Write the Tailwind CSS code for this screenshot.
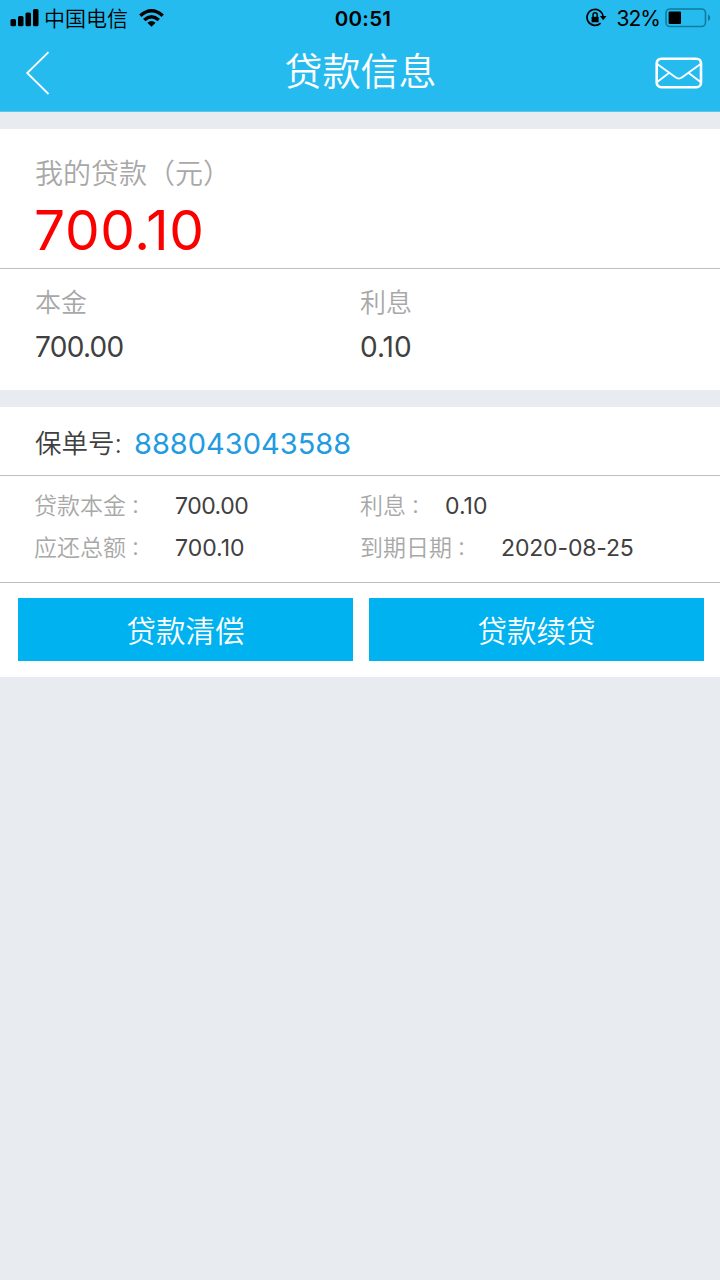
<!DOCTYPE html>
<html lang="zh-CN">
<head>
<meta charset="utf-8">
<title>贷款信息</title>
<script src="https://cdn.jsdelivr.net/npm/@tailwindcss/browser@4"></script>
</head>
<body class="h-[1280px] w-[720px] overflow-hidden bg-[#e8ebf0] font-['Inter','Noto_Sans_CJK_SC',sans-serif] whitespace-nowrap text-[#404040]">
<header class="h-[112px] bg-[#26bbef] border-b border-[#62c4e8]">
  <div class="flex h-9 items-center pl-[10px] pr-[8px] text-black">
    <div class="flex flex-1 items-center">
      <svg class="h-[18px] w-[29px]" viewBox="0 0 29 18"><rect x=".5" y="10" width="5.5" height="7.2" rx="1.5"/><rect x="8" y="7" width="5.5" height="10.2" rx="1.5"/><rect x="15.5" y="3.5" width="5.5" height="13.7" rx="1.5"/><rect x="23" y="0" width="5.5" height="17.2" rx="1.5"/></svg>
      <span class="ml-[5px] pt-[2px] text-[21px] font-[350] leading-9">中国电信</span>
      <svg class="ml-[11px] h-[18px] w-[25px]" viewBox="0 0 25 18" fill="none" stroke="#000" stroke-width="3.4"><path d="M1.3 6.8Q12.5-3.2 23.7 6.8M5.2 11Q12.5 4.6 19.8 11"/><path d="M8.4 13.8Q12.5 10.3 16.6 13.8L12.5 17.8Z" fill="#000" stroke="none"/></svg>
    </div>
    <span class="ml-[4px] pt-[1px] text-[20.5px] font-semibold leading-9 tracking-[0.3px]">00:51</span>
    <div class="flex flex-1 items-center justify-end">
      <svg class="h-[20px] w-[21px]" viewBox="0 0 21 20" fill="none" stroke="#000" stroke-width="1.7"><path d="M14.6 15.1A8 8 0 1 1 17 8.6"/><path d="M13.9 8H20.5L17.2 12.3Z" fill="#000" stroke="none"/><rect x="5.6" y="8.8" width="7" height="5.4" rx=".5" fill="#000" stroke="none"/><path d="M7 9V6.9a2.1 2.1 0 0 1 4.2 0V9" stroke-width="1.4"/></svg>
      <span class="ml-[10px] pt-px text-[21px] leading-9 tracking-[-1px]">32%</span>
      <svg class="ml-[5px] h-[20px] w-[47px]" viewBox="0 0 47 20"><rect x="1" y="1" width="39.5" height="17.5" rx="4" fill="none" stroke="#117b9d" stroke-width="1.6"/><rect x="3.6" y="3.6" width="12.4" height="12.4" rx="1"/><path d="M43 6.5q2.3 1 2.3 3.3t-2.3 3.3z" fill="#117b9d"/></svg>
    </div>
  </div>
  <div class="flex h-[75px] items-start justify-between pl-[25px] pr-[17px] text-white">
    <svg class="mt-[15px] h-[46px] w-[48px]" viewBox="0 0 48 46" fill="none" stroke="#fff" stroke-width="1.8"><path d="M23.5 1.2L2.2 22L23.5 43"/></svg>
    <h1 class="mr-[7px] text-[38px] font-[350] leading-[70px]">贷款信息</h1>
    <svg class="mt-[21px] h-[32px] w-[48px]" viewBox="0 0 48 32" fill="none" stroke="#fff"><rect x="1.7" y="1.7" width="44.3" height="28.5" rx="4.5" stroke-width="2.6"/><path d="M2.5 7.2L20.5 20.3Q23.8 22.8 27.2 20.3L45.2 7.2M2.5 24.8L14.3 15.8M45.2 24.8L33.4 15.8" stroke-width="1.8"/></svg>
  </div>
</header>

<main>
  <section class="mt-[17px] h-[261px] bg-white">
    <div class="h-[140px] border-b border-[#bebebe] px-[35px] pt-[26px]">
      <div class="h-[38px] text-[28px] font-[350] leading-[38px] text-[#a8a8a8]">我的贷款（元）</div>
      <div class="-ml-px text-[55px] leading-[74px] tracking-[0.7px] text-[#fc0000]">700.10</div>
    </div>
    <div class="grid grid-cols-[325px_1fr] px-[35px] pt-[15px]">
      <div class="text-[26px] font-[350] leading-[38px] text-[#a8a8a8]">本金</div>
      <div class="text-[26px] font-[350] leading-[38px] text-[#a8a8a8]">利息</div>
      <div class="text-[28px] leading-[50px] tracking-[-0.7px]">700.00</div>
      <div class="text-[28px] leading-[50px]">0.10</div>
    </div>
  </section>

  <section class="mt-[17px] h-[270px] bg-white">
    <div class="flex h-[69px] items-center border-b border-[#bebebe] px-[35px] pt-[5px]">
      <span class="pt-px text-[26.5px] font-[350]">保单号:</span>
      <span class="ml-[12px] text-[29px] text-[#229be0]">888043043588</span>
    </div>
    <div class="grid h-[107px] auto-rows-[42px] grid-cols-[326px_1fr] content-start border-b border-[#bebebe] pl-[34px] pt-[9px] text-[23px] leading-[42px]">
      <div class="flex"><span class="flex w-[141px] font-[350] text-[#a8a8a8]">贷款本金<span class="font-['Noto_Sans_CJK_TC',sans-serif] text-[19px]" lang="zh-TW">：</span></span><span class="tracking-[-0.5px]">700.00</span></div>
      <div class="flex"><span class="flex w-[85px] font-[350] text-[#a8a8a8]">利息<span class="font-['Noto_Sans_CJK_TC',sans-serif] text-[19px]" lang="zh-TW">：</span></span><span>0.10</span></div>
      <div class="flex"><span class="flex w-[141px] font-[350] text-[#a8a8a8]">应还总额<span class="font-['Noto_Sans_CJK_TC',sans-serif] text-[19px]" lang="zh-TW">：</span></span><span>700.10</span></div>
      <div class="flex"><span class="flex w-[141px] font-[350] text-[#a8a8a8]">到期日期<span class="font-['Noto_Sans_CJK_TC',sans-serif] text-[19px]" lang="zh-TW">：</span></span><span class="tracking-[-0.15px]">2020-08-25</span></div>
    </div>
    <div class="flex gap-[16px] pl-[18px] pr-[16px] pt-[15px]">
      <button class="h-[63px] flex-1 bg-[#00b2f0] pt-[3px] text-[29.5px] font-[350] text-white">贷款清偿</button>
      <button class="h-[63px] flex-1 bg-[#00b2f0] pt-[3px] text-[29.5px] font-[350] text-white">贷款续贷</button>
    </div>
  </section>
</main>
</body>
</html>
